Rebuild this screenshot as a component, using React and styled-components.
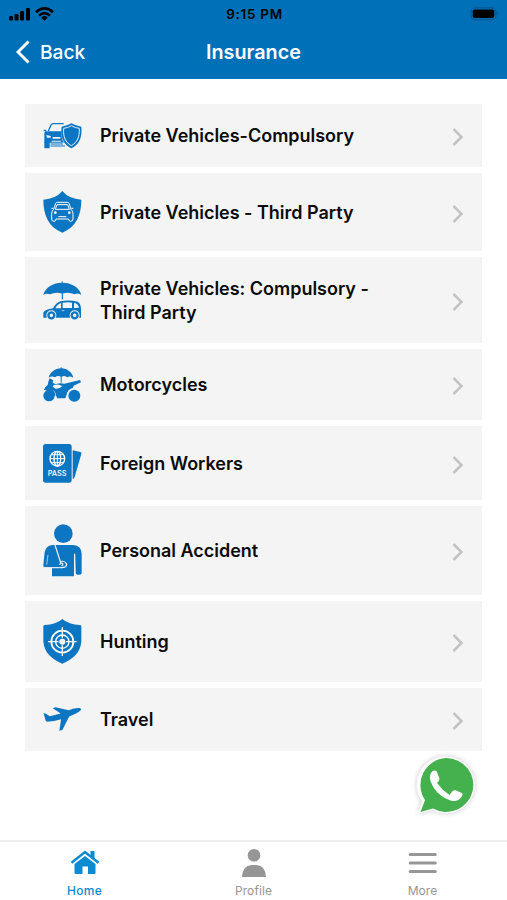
import React from "react";
import styled, { createGlobalStyle } from "styled-components";

const GlobalStyle = createGlobalStyle`
body {
  margin: 0;
  background: #fff;
  font-family: Inter, "Liberation Sans", sans-serif;
}
`

const CarShieldIcon = () => (
  <svg width="39" height="26" viewBox="70 85 117 78" fill="#0d76c2">
    <path d="M86 109 L94 91 Q96 87 101 87 H132 M80 107 H72" fill="none" stroke="#0d76c2" strokeWidth="4" />
    <path d="M76 110 H126 Q124 132 132 144 H74 V119 Q74 113 76 110Z" />
    <path d="M74 142 H90 V159 Q90 161 88 161 H76 Q74 161 74 159Z" />
    <path d="M92 148 H130 M92 154 H136" fill="none" stroke="#0d76c2" strokeWidth="3" />
    <path d="M80 121 L93 124 V129 H82Z M99 127 H122 V132 H99Z M96 138 H124 V141 H96Z" fill="#f4f4f4" />
    <path d="M155 86 Q142 94 126 96 C122 127 131 150 155 161 C180 150 188 127 185 96 Q169 94 155 86Z" />
    <path d="M155 93 Q144 100 132 101 C130 127 137 143 155 153 C173 143 180 127 179 101 Q167 100 155 93Z" fill="none" stroke="#e5f1fa" strokeWidth="3" />
  </svg>
)

const ShieldCarIcon = () => (
  <svg width="39" height="42" viewBox="70 64 117 126" fill="#0d76c2">
    <path d="M128 64 Q108 88 71 90 C71 137 87 172 128 189 C169 172 185 137 185 90 Q148 88 128 64Z" />
    <g fill="none" stroke="#fff" strokeWidth="3" strokeLinejoin="round">
      <path d="M102 119 L108 101 Q109 98 113 98 H143 Q147 98 148 101 L154 119 Q160 124 160 132 V148 Q160 155 153 155 Q147 155 147 148 H109 Q109 155 103 155 Q96 155 96 148 V132 Q96 124 102 119Z" />
      <path d="M107 119 L112 105 H144 L149 119Z M101 116 H95 M155 116 H161" />
      <path d="M116 141 H140" />
    </g>
    <circle cx="107" cy="129" r="4" fill="#fff" />
    <circle cx="149" cy="129" r="4" fill="#fff" />
  </svg>
)

const UmbrellaCarIcon = () => (
  <svg width="39" height="39" viewBox="70 77 117 117" fill="#0d76c2">
    <path d="M71 119 C76 96 102 82 126 82 V78 H129 V82 C154 82 180 96 185 119 Q177 111 165 117 Q147 109 128 115 Q109 109 91 117 Q79 112 71 119Z" />
    <path d="M126.5 114 H130 V132 H126.5Z" />
    <path d="M71 187 V172 Q74 163 100 159 Q109 142 122 138 Q147 132 174 139 Q183 144 184 160 V187Z" />
    <path d="M107 159 Q114 146 124 143 V159Z M129 142 Q146 139 157 142 V158 H129Z M163 143 Q174 143 178 157 L163 158Z" fill="#f4f4f4" />
    <path d="M126 166 H134" stroke="#f4f4f4" strokeWidth="2" />
    <circle cx="95" cy="180" r="15" fill="#f4f4f4" />
    <circle cx="165" cy="180" r="15" fill="#f4f4f4" />
    <circle cx="95" cy="180" r="9" fill="none" stroke="#0d76c2" strokeWidth="7" />
    <circle cx="165" cy="180" r="9" fill="none" stroke="#0d76c2" strokeWidth="7" />
  </svg>
)

const MotorcycleIcon = () => (
  <svg width="39" height="35" viewBox="70 67 117 105" fill="#0d76c2">
    <path d="M87 99 C91 82 107 72 123 71 V68 H126 V71 C142 72 157 82 161 99 Q151 92 142 98 Q134 91 125 97 Q115 91 106 98 Q97 92 87 99Z" />
    <path d="M123 94 H126 V114 H123Z" />
    <path d="M90 101 L101 107 L99 114 L108 119 Q120 113 134 117 L181 106 L184 113 L162 123 L158 133 Q147 137 141 151 L137 161 H112 Q108 143 92 136 H73 Q75 126 84 121 Q86 108 90 101Z" />
    <path d="M103 121 Q116 116 128 125 Q119 133 108 132 Q101 129 99 125Z" fill="#f4f4f4" />
    <circle cx="89" cy="153" r="20" fill="#f4f4f4" />
    <circle cx="88" cy="153" r="17" />
    <circle cx="163" cy="152" r="22" fill="#f4f4f4" />
    <circle cx="164" cy="153" r="18" />
    <path d="M84 126 Q103 131 108 152 L97 156 Q93 139 73 135Z" />
  </svg>
)

const PassportIcon = () => (
  <svg width="39" height="39" viewBox="70 57 117 117" fill="#0d76c2">
    <path d="M159 76 L182 81 Q187 82 185 87 L165 156 Q163 162 159 162Z" />
    <rect x="70" y="57" width="86" height="116" rx="8" />
    <g fill="none" stroke="#fff" strokeWidth="4">
      <circle cx="113" cy="101" r="22" />
      <ellipse cx="113" cy="101" rx="10" ry="22" />
      <path d="M113 79 V123 M91 101 H135 M96 89 H130 M96 113 H130" strokeWidth="3" />
    </g>
    <text x="84" y="154" fill="#fff" fontFamily="Inter, sans-serif" fontSize="23" fontWeight="500" textLength="57" lengthAdjust="spacingAndGlyphs">PASS</text>
  </svg>
)

const InjuredIcon = () => (
  <svg width="39" height="53" viewBox="70 58 117 159" fill="#0d76c2">
    <circle cx="131" cy="87" r="28" />
    <path d="M98 121 H160 Q186 123 186 148 V204 Q186 210 177 210 Q168 210 168 204 L166 150 H163 V215 H97 V190 H76 Q70 188 71 180 L75 143 Q78 123 98 121Z" />
    <g fill="none" stroke="#f4f4f4" strokeWidth="3.5">
      <path d="M106 121 L123 174" />
      <path d="M81 180 L85 151" strokeWidth="2" />
      <path d="M72 189 H119" />
      <path d="M121 173 Q129 166 138 174 Q144 180 138 186 Q130 190 119 188 M119 180 Q125 173 129 177 Q131 181 126 184" />
      <path d="M165 147 V207" />
    </g>
  </svg>
)

const TargetShieldIcon = () => (
  <svg width="39" height="45" viewBox="70 55 117 135" fill="#0d76c2">
    <path d="M128 55 Q109 72 75 73 Q71 73 71 78 V122 C73 157 98 177 128 189 C158 177 183 157 185 122 V78 Q185 73 181 73 Q147 72 128 55Z" />
    <g fill="none" stroke="#fff">
      <circle cx="128" cy="123" r="33" strokeWidth="5.5" />
      <circle cx="128" cy="123" r="20" strokeWidth="4" />
      <path d="M128 80 V112 M128 134 V166 M85 123 H117 M139 123 H171" strokeWidth="4" />
    </g>
    <circle cx="128" cy="123" r="9" fill="#fff" />
  </svg>
)

const PlaneIcon = () => (
  <svg width="39" height="24" viewBox="70 323 117 73" fill="#0d76c2">
    <path d="M71 342 L77 343 L90 351 L123 343 L99 327 L107 324 L147 333 Q166 325 180 326 Q188 328 183 334 Q176 342 149 352 L128 393 L119 395 L124 360 Q103 367 82 368 Q77 367 76 360Z" />
  </svg>
)

const products = [
  { title: "Private Vehicles-Compulsory", height: 63.4, Icon: CarShieldIcon },
  { title: "Private Vehicles - Third Party", height: 78, Icon: ShieldCarIcon },
  { title: "Private Vehicles: Compulsory - Third Party", height: 86, Icon: UmbrellaCarIcon },
  { title: "Motorcycles", height: 70.8, Icon: MotorcycleIcon },
  { title: "Foreign Workers", height: 74, Icon: PassportIcon },
  { title: "Personal Accident", height: 88.8, Icon: InjuredIcon },
  { title: "Hunting", height: 80.6, Icon: TargetShieldIcon },
  { title: "Travel", height: 63.6, Icon: PlaneIcon },
]

const App = () => {

  const [tab, setTab] = React.useState("home");

  return (
    <>
    <GlobalStyle />
    <Screen>
      <Header>
        <StatusBar>
          <Signals>
            <svg width="22" height="14" viewBox="0 0 22 14">
              <rect x="0" y="9" width="4" height="4.5" rx="1.2" />
              <rect x="5.5" y="7" width="4" height="6.5" rx="1.2" />
              <rect x="11" y="4" width="4" height="9.5" rx="1.2" />
              <rect x="17" y="1" width="4" height="12.5" rx="1.2" />
            </svg>
            <svg width="19" height="14" viewBox="0 0 19 14">
              <g fill="none" stroke="#000" strokeWidth="2.6">
                <path d="M1 5.2 Q9.5 -2.3 18 5.2" />
                <path d="M4 8.6 Q9.5 3.7 15 8.6" />
              </g>
              <path d="M6.2 10.4 Q9.5 7.6 12.8 10.4 L9.5 13.8Z" />
            </svg>
          </Signals>
          <Time>9:15 PM</Time>
          <Battery>
            <svg width="30" height="14" viewBox="0 0 30 14">
              <rect x="1" y=".8" width="25" height="12" rx="3.5" fill="none" stroke="#00548e" strokeWidth="1" />
              <rect x="2.7" y="2.5" width="21.6" height="8.6" rx="2" />
              <path d="M27.5 5 Q29.5 6.8 27.5 8.6Z" fill="#00548e" />
            </svg>
          </Battery>
        </StatusBar>
        <TitleBar>
          <BackButton>
            <svg width="14" height="24" viewBox="0 0 14 24">
              <path d="M12.5 1.5 L2 12 L12.5 22.5" fill="none" stroke="#fff" strokeWidth="3" />
            </svg>
            Back
          </BackButton>
          <Title>Insurance</Title>
        </TitleBar>
      </Header>

      <ProductList>
        {products.map(({ title, height, Icon }) => (
          <ProductRow key={title} $height={height}>
            <Icon />
            <ProductName>{title}</ProductName>
            <Chevron viewBox="0 0 12 18">
              <path d="M1.5 1 L9.5 9 L1.5 17" fill="none" stroke="#c3c3c3" strokeWidth="2.5" />
            </Chevron>
          </ProductRow>
        ))}
      </ProductList>

      <WhatsApp aria-label="WhatsApp">
        <svg width="76" height="76" viewBox="0 0 76 76">
          <path d="M38 9.5 A28.5 28.5 0 1 1 24.5 63 L10 66.5 L14 54.5 A28.5 28.5 0 0 1 38 9.5Z" fill="#fff" />
          <path d="M38 11 A27 27 0 1 1 25 61.5 L12.5 65 L17 53 A27 27 0 0 1 38 11Z" fill="#44b04e" />
          <path d="M23 26 Q25 22.5 28.5 24 L31.5 31.5 Q31.5 34 29 36 Q34 43 41.5 48 L44.5 44 Q46 43 48 43.5 L54 46 Q55.5 47.5 53 50.5 Q48.5 56 41 53 Q26.5 47 22.5 34 Q21 29.5 23 26Z" fill="#fff" />
        </svg>
      </WhatsApp>

      <TabBar>
        <Tab $active={tab === "home"} onClick={() => setTab("home")}>
          <svg width="30" height="28" viewBox="0 0 30 28">
            <path d="M4.5 15 L15 7 L25.5 15 V24 Q25.5 25 24.5 25 H18 V17.5 H12.5 V25 H6 Q4.5 25 4.5 23.5Z" />
            <path d="M1.5 13.8 L15 3 L28.5 13.8" fill="none" stroke="currentColor" strokeWidth="2.5" />
            <path d="M20.5 2 H24.5 V10 L20.5 6.8Z" />
          </svg>
          Home
        </Tab>
        <Tab $active={tab === "profile"} onClick={() => setTab("profile")}>
          <svg width="30" height="28" viewBox="0 0 30 28">
            <circle cx="15" cy="6.3" r="6.3" />
            <path d="M3 28 Q3.5 16.5 12.5 16 H17.5 Q26.5 16.5 27 28Z" />
          </svg>
          Profile
        </Tab>
        <Tab $active={tab === "more"} onClick={() => setTab("more")}>
          <svg width="30" height="28" viewBox="0 0 30 28">
            <path d="M2.2 5.4 H27.3 M2.2 14 H27.3 M2.2 22.4 H27.3" stroke="currentColor" strokeWidth="3" strokeLinecap="round" />
          </svg>
          More
        </Tab>
      </TabBar>
    </Screen>
    </>
  )
}

let Screen = styled.div`
  position: relative;
  display: flex;
  flex-direction: column;
  width: 507px;
  height: 900px;
  overflow: hidden;
`

let Header = styled.header`
  height: 79px;
  flex-shrink: 0;
  box-sizing: border-box;
  background: #0070b9;
`

let StatusBar = styled.div`
  display: grid;
  grid-template-columns: 1fr auto 1fr;
  align-items: center;
  height: 27px;
  padding: 0 7px 0 9px;

  svg {
    display: block;
  }
`

let Signals = styled.div`
  display: flex;
  gap: 4px;
`

let Time = styled.div`
  font-size: 13.5px;
  font-weight: 600;
  letter-spacing: 0.7px;
`

let Battery = styled.div`
  justify-self: end;
`

let TitleBar = styled.div`
  display: grid;
  grid-template-columns: 1fr auto 1fr;
  align-items: center;
  height: 50px;
  padding: 0 16px;
  color: #fff;
`

let BackButton = styled.button`
  display: flex;
  align-items: center;
  gap: 10px;
  padding: 0;
  border: none;
  background: none;
  color: #fff;
  font: 500 19.2px Inter, "Liberation Sans", sans-serif;
  cursor: pointer;
`

let Title = styled.h1`
  margin: 0;
  font-size: 19.8px;
  font-weight: 600;
`

let ProductList = styled.main`
  display: flex;
  flex-direction: column;
  flex: 1;
  gap: 6px;
  padding: 25px 25px 0;
`

let ProductRow = styled.div`
  display: flex;
  align-items: center;
  flex-shrink: 0;
  box-sizing: border-box;
  height: ${(props) => props.$height}px;
  padding: 0 18px;
  background: #f4f4f4;
  cursor: pointer;

  svg {
    flex-shrink: 0;
  }
`

let ProductName = styled.div`
  flex: 1;
  padding: 1.6px 50px 0 18px;
  color: #0b0b0b;
  font-size: 18px;
  font-weight: 600;
  line-height: 24.4px;
  letter-spacing: -0.02px;
`

let Chevron = styled.svg`
  width: 12px;
  height: 18px;
  margin-top: 3px;
`

let WhatsApp = styled.button`
  position: absolute;
  right: 23px;
  bottom: 77px;
  padding: 0;
  border: none;
  background: none;
  cursor: pointer;

  svg {
    display: block;
    filter: drop-shadow(0 0 2.5px rgba(0, 0, 0, 0.22));
  }
`

let TabBar = styled.nav`
  display: flex;
  flex-shrink: 0;
  height: 60px;
  box-sizing: border-box;
  border-top: 2px solid #ededed;
`

let Tab = styled.button`
  display: flex;
  flex: 1;
  flex-direction: column;
  align-items: center;
  gap: 6px;
  padding: 7px 0 0;
  border: none;
  background: none;
  color: ${(props) => props.$active ? "#0c8bd0" : "#969696"};
  font: ${(props) => props.$active ? 500 : 400} 12px/16px Inter, "Liberation Sans", sans-serif;
  letter-spacing: ${(props) => props.$active ? "0.3px" : "0.1px"};
  cursor: pointer;

  svg {
    fill: currentColor;
  }
`

export default App;
